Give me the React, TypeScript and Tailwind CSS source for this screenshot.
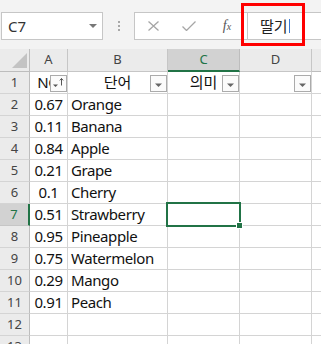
import React from 'react';

const data: [string, string][] = [
  ['0.67', 'Orange'],
  ['0.11', 'Banana'],
  ['0.84', 'Apple'],
  ['0.21', 'Grape'],
  ['0.1', 'Cherry'],
  ['0.51', 'Strawberry'],
  ['0.95', 'Pineapple'],
  ['0.75', 'Watermelon'],
  ['0.29', 'Mango'],
  ['0.91', 'Peach'],
];

const cols = 'grid grid-cols-[30px_38px_100px_72px_72px_1fr]';

function FilterButton({ sorted = false }: { sorted?: boolean }) {
  return (
    <div className="absolute right-0 top-[3px] w-[17px] h-[17px] border border-[#ababab] bg-[#fbfbfb]">
      <svg width="15" height="15" viewBox="0 0 15 15" className="block">
        {sorted ? (
          <>
            <path d="M2 8.5h5l-2.5 2.5z" fill="#555" />
            <path d="M10.5 2.5v7M8.8 4.4l1.7-1.9 1.7 1.9" stroke="#555" strokeWidth="1" fill="none" />
          </>
        ) : (
          <path d="M4 7.5h7l-3.5 3.5z" fill="#666" />
        )}
      </svg>
    </div>
  );
}

function FormulaBar() {
  return (
    <div className="h-[49px] bg-[#f3f3f3] flex items-start pt-[12px]">
      {/* name box */}
      <div className="ml-[1px] w-[102px] h-[28px] border border-[#c6c6c6] bg-white flex items-center justify-between pl-[6px] pr-[5px]">
        <span className="text-[15px] text-[#333] leading-none">C7</span>
        <svg width="8" height="5" viewBox="0 0 8 5">
          <path d="M0 0h8L4 4z" fill="#777" />
        </svg>
      </div>
      <div className="w-[31px] h-[28px] flex flex-col items-center justify-center gap-[2px]">
        <span className="w-[2px] h-[2px] bg-[#a8a8a8]" />
        <span className="w-[2px] h-[2px] bg-[#a8a8a8]" />
        <span className="w-[2px] h-[2px] bg-[#a8a8a8]" />
      </div>
      {/* formula box */}
      <div className="flex-1 h-[28px] border border-r-0 border-[#c6c6c6] bg-white flex items-stretch">
        <div className="w-[36px] flex items-center justify-center">
          <svg width="11" height="10" viewBox="0 0 11 10">
            <path d="M0.5 0.5l10 9M10.5 0.5l-10 9" stroke="#a6a6a6" strokeWidth="1.3" />
          </svg>
        </div>
        <div className="w-[36px] flex items-center justify-center">
          <svg width="14" height="10" viewBox="0 0 14 10">
            <path d="M0.5 5.5l4 4L13.5 0.5" stroke="#a6a6a6" strokeWidth="1.3" fill="none" />
          </svg>
        </div>
        <div className="w-[40px] flex items-center justify-center">
          <span className="font-['Liberation_Serif',serif] italic text-[14px] text-[#555] leading-none">
            f<span className="text-[10px]">x</span>
          </span>
        </div>
        <div className="flex-1 border-l border-[#c6c6c6] flex items-center pl-[12px]">
          <span className="text-[15px] text-[#222] leading-none">딸기</span>
          <span className="w-[1px] h-[14px] bg-[#3b7bd4] ml-[1px]" />
        </div>
      </div>
    </div>
  );
}

function Sheet() {
  const rows = Array.from({ length: 13 }, (_, i) => i + 1);
  return (
    <div className="relative">
      <div className={`${cols} h-[23px] bg-[#ebebeb] text-[13px] text-[#444]`}>
        <div className="border-r border-b border-[#bdbdbd]">
          <svg width="29" height="22" viewBox="0 0 29 22" className="block">
            <path d="M27 4v15H12z" fill="#c3c3c3" />
          </svg>
        </div>
        {['A', 'B', 'C', 'D'].map((c) =>
          c === 'C' ? (
            <div key={c} className="bg-[#d2d2d2] border-r border-[#bdbdbd] border-b-2 border-b-[#217346] flex items-center justify-center text-[#217346]">
              {c}
            </div>
          ) : (
            <div key={c} className="border-r border-b border-[#c6c6c6] flex items-center justify-center">
              {c}
            </div>
          )
        )}
        <div className="border-b border-[#bdbdbd]" />
      </div>

      {rows.map((r) => {
        const item = r >= 2 && r <= 11 ? data[r - 2] : null;
        const selected = r === 7;
        return (
          <div key={r} className={`${cols} h-[22px] leading-[21px] text-[15px] tracking-[-0.4px] text-[#111]`}>
            <div
              className={
                selected
                  ? 'bg-[#d2d2d2] border-b border-b-[#c6c6c6] border-r-2 border-r-[#217346] text-[13px] tracking-normal text-[#217346] text-center'
                  : 'bg-[#ebebeb] border-b border-b-[#d4d4d4] border-r border-r-[#bdbdbd] text-[13px] tracking-normal text-[#444] text-center'
              }
            >
              {r}
            </div>
            <div className="relative border-r border-b border-[#d4d4d4] text-center">
              {r === 1 ? (
                <>
                  <span>NO</span>
                  <FilterButton sorted />
                </>
              ) : (
                item?.[0]
              )}
            </div>
            <div className={`relative border-r border-b border-[#d4d4d4] ${r === 1 ? 'text-center' : 'pl-[3px]'}`}>
              {r === 1 ? (
                <>
                  <span className="tracking-normal">단어</span>
                  <FilterButton />
                </>
              ) : (
                item?.[1]
              )}
            </div>
            <div className="relative border-r border-b border-[#d4d4d4] text-center">
              {r === 1 && (
                <>
                  <span className="tracking-normal">의미</span>
                  <FilterButton />
                </>
              )}
            </div>
            <div className="relative border-r border-b border-[#d4d4d4]">{r === 1 && <FilterButton />}</div>
            <div className="border-b border-[#d4d4d4]" />
          </div>
        );
      })}

      {/* active cell C7 */}
      <div className="absolute left-[166px] top-[153px] w-[75px] h-[25px] border-2 border-[#217346]" />
      <div className="absolute left-[236px] top-[173px] w-[7px] h-[7px] bg-[#217346] border border-white" />
    </div>
  );
}

export default function App() {
  return (
    <div className="w-[321px] h-[344px] overflow-hidden relative bg-white font-['Noto_Sans','Noto_Sans_CJK_KR',sans-serif]">
      <FormulaBar />
      <Sheet />
      <div className="absolute left-[241px] top-[3px] w-[64px] h-[43px] border-[3px] border-[#ff0000]" />
    </div>
  );
}
